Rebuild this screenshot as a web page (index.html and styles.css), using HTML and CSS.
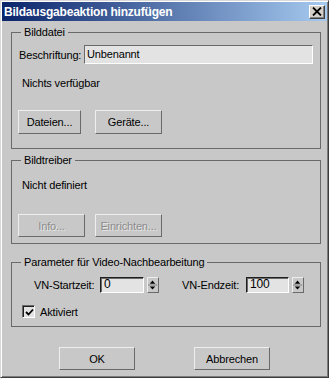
FILE: index.html
```html
<!DOCTYPE html>
<html>
<head>
<meta charset="utf-8">
<link rel="stylesheet" href="styles.css">
</head>
<body>
<div class="window">
  <div class="titlebar">
    <span class="title">Bildausgabeaktion hinzufügen</span>
    <span class="close">
      <svg width="10" height="9" viewBox="0 0 10 9"><path d="M1 0.5 L9 8.5 M9 0.5 L1 8.5" stroke="#000" stroke-width="1.8" fill="none"/></svg>
    </span>
  </div>
  <div class="content">
    <div class="group g1">
      <span class="legend">Bilddatei</span>
      <div class="row caption-row">
        <span class="cap-label">Beschriftung:</span>
        <div class="field wide">Unbenannt</div>
      </div>
      <div class="info-text">Nichts verfügbar</div>
      <div class="btnrow r1">
        <button class="btn b-dateien">Dateien...</button>
        <button class="btn b-geraete">Geräte...</button>
      </div>
    </div>
    <div class="group g2">
      <span class="legend">Bildtreiber</span>
      <div class="info-text t2">Nicht definiert</div>
      <div class="btnrow r2">
        <button class="btn b-info" disabled>Info...</button>
        <button class="btn b-einr" disabled>Einrichten...</button>
      </div>
    </div>
    <div class="group g3">
      <span class="legend">Parameter für Video-Nachbearbeitung</span>
      <div class="row spin-row">
        <span class="sp-label l-start">VN-Startzeit:</span>
        <div class="field num n-start">0</div>
        <span class="spinner">
          <svg width="12" height="16" viewBox="0 0 12 16"><path d="M6 3 L9 6.5 L3 6.5 Z" fill="#000"/><path d="M1 8 H11" stroke="#7a7a7a" stroke-width="1"/><path d="M6 13 L9 9.5 L3 9.5 Z" fill="#000"/></svg>
        </span>
        <span class="sp-label l-end">VN-Endzeit:</span>
        <div class="field num n-end">100</div>
        <span class="spinner">
          <svg width="12" height="16" viewBox="0 0 12 16"><path d="M6 3 L9 6.5 L3 6.5 Z" fill="#000"/><path d="M1 8 H11" stroke="#7a7a7a" stroke-width="1"/><path d="M6 13 L9 9.5 L3 9.5 Z" fill="#000"/></svg>
        </span>
      </div>
      <label class="check-row">
        <span class="checkbox">
          <svg width="9" height="9" viewBox="0 0 9 9"><path d="M1 4 L3.5 6.5 L8 1.5" stroke="#000" stroke-width="1.8" fill="none"/></svg>
        </span>
        <span>Aktiviert</span>
      </label>
    </div>
    <div class="dlg-buttons">
      <button class="btn b-ok">OK</button>
      <button class="btn b-cancel">Abbrechen</button>
    </div>
  </div>
</div>
</body>
</html>
```

FILE: styles.css
```css
html, body {
  margin: 0;
  padding: 0;
  background: #c8c8c8;
}
body {
  font-family: "Liberation Sans", Arial, sans-serif;
  font-size: 11px;
  letter-spacing: -0.15px;
  color: #000;
}
.window {
  width: 329px;
  height: 378px;
  box-sizing: border-box;
  background: #c8c8c8;
  border: 1px solid;
  border-color: #d8d8d8 #3c3c3c #3c3c3c #d8d8d8;
  box-shadow: inset 1px 1px #ffffff, inset -1px -1px #7c7c7c;
  padding: 1px;
  display: flex;
  flex-direction: column;
}
.titlebar {
  height: 19px;
  background: linear-gradient(to right, #0a246a, #a6caf0);
  display: flex;
  align-items: center;
  justify-content: space-between;
  padding-left: 2px;
}
.title {
  color: #fff;
  font-weight: bold;
  font-size: 12px;
  letter-spacing: -0.2px;
}
.close {
  width: 16px;
  height: 14px;
  box-sizing: border-box;
  background: #d4d0c8;
  border: 1px solid;
  border-color: #ffffff #404040 #404040 #ffffff;
  box-shadow: inset -1px -1px #808080;
  display: flex;
  align-items: center;
  justify-content: center;
  margin-right: 2px;
}
.close svg { display: block; margin-left: -1px; }
.content {
  padding-left: 9px;
  display: flex;
  flex-direction: column;
}
.group {
  position: relative;
  width: 310px;
  box-sizing: border-box;
  border: 1px solid #6a6a6a;
  display: flex;
  flex-direction: column;
}
.legend {
  position: absolute;
  top: -7px;
  left: 9px;
  padding: 0 3px;
  background: #c8c8c8;
  line-height: 13px;
}
.g1 { margin-top: 11px; height: 117px; }
.g2 { margin-top: 11px; height: 84px; }
.g3 { margin-top: 18px; height: 65px; }

.row { display: flex; align-items: center; }
.caption-row { margin-top: 12px; padding-left: 7px; }
.cap-label { width: 65px; }
.field {
  box-sizing: border-box;
  background: #e3e3e3;
  border: 1px solid;
  border-color: #6a6a6a #ffffff #ffffff #6a6a6a;
  line-height: 15px;
  padding-left: 2px;
  white-space: nowrap;
}
.wide { width: 229px; height: 19px; line-height: 16px; }

.info-text { margin-top: 13px; padding-left: 10px; line-height: 13px; }
.t2 { margin-top: 18px; }

.btnrow { display: flex; padding-left: 6px; }
.r1 { margin-top: 20px; }
.r2 { margin-top: 22px; }
.btn {
  box-sizing: border-box;
  background: #c8c8c8;
  border: 1px solid;
  border-color: #eeeeee #6a6a6a #6a6a6a #eeeeee;
  font-family: "Liberation Sans", Arial, sans-serif;
  font-size: 11px;
  letter-spacing: -0.15px;
  color: #000;
  padding: 0;
  margin: 0;
}
.btn:disabled {
  color: #8c8c8c;
  text-shadow: 1px 1px #e6e6e6;
}
.b-dateien { width: 63px; height: 24px; }
.b-geraete { width: 67px; height: 24px; margin-left: 14px; }
.b-info { width: 67px; height: 23px; }
.b-einr { width: 67px; height: 23px; margin-left: 10px; }

.spin-row { margin-top: 14px; padding-left: 22px; }
.sp-label { line-height: 16px; }
.l-start { width: 66px; }
.l-end { width: 64px; margin-left: 23px; }
.num {
  height: 16px;
  border-color: #1e1e1e #ffffff #ffffff #1e1e1e;
  box-shadow: inset 1px 1px #6a6a6a;
  line-height: 13px;
  padding-left: 3px;
  font-size: 12px;
}
.n-start { width: 44px; }
.n-end { width: 43px; }
.spinner {
  width: 12px;
  height: 16px;
  box-sizing: border-box;
  margin-left: 3px;
  background: #c8c8c8;
  border: 1px solid;
  border-color: #eeeeee #6a6a6a #6a6a6a #eeeeee;
  display: flex;
  overflow: hidden;
}
.spinner svg { display: block; margin: -1px 0 0 -1px; }

.check-row {
  display: flex;
  align-items: center;
  margin-top: 12px;
  padding-left: 10px;
}
.checkbox {
  width: 13px;
  height: 13px;
  box-sizing: border-box;
  background: #e3e3e3;
  border: 1px solid;
  border-color: #6a6a6a #ffffff #ffffff #6a6a6a;
  box-shadow: inset 1px 1px #1e1e1e;
  display: flex;
  align-items: center;
  justify-content: center;
  margin-right: 5px;
}
.checkbox svg { display: block; margin: 1px 0 0 1px; }

.dlg-buttons {
  display: flex;
  margin-top: 20px;
  padding-left: 48px;
}
.b-ok { width: 76px; height: 23px; }
.b-cancel { width: 76px; height: 23px; margin-left: 59px; }
```
